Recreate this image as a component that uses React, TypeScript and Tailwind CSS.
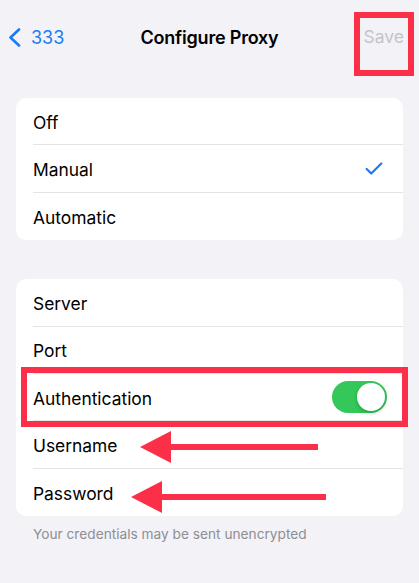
import { Check } from "lucide-react";

const font = { fontFamily: "Inter, 'Noto Sans', sans-serif" };

function Row({ label, last, right }: { label: string; last?: boolean; right?: React.ReactNode }) {
  return (
    <div className="pl-[17px]">
      <div
        className={`flex h-[47.4px] items-center justify-between pr-[16px] ${
          last ? "" : "border-b border-[#e3e3e8]"
        }`}
      >
        <span className="pt-[3px] text-[17.4px] text-black">{label}</span>
        {right}
      </div>
    </div>
  );
}

function Arrow({ width }: { width: number }) {
  // red annotation arrow pointing left
  return (
    <svg width={width} height="34" viewBox={`0 0 ${width} 34`}>
      <polygon points="0,17 31,1 31,33" fill="#fb2f47" />
      <rect x="28" y="14" width={width - 28} height="6" fill="#fb2f47" />
    </svg>
  );
}

export default function App() {
  return (
    <div className="relative h-[583px] w-[419px] overflow-hidden bg-[#f2f2f7]" style={font}>
      {/* nav bar */}
      <div className="grid h-[75px] grid-cols-[1fr_auto_1fr] items-center px-2">
        <div className="flex items-center gap-[10px] text-[#1a7cf5]">
          <svg width="13" height="19" viewBox="0 0 13 19" fill="none">
            <path d="M11 1.5 L2.5 9.5 L11 17.5" stroke="#1a7cf5" strokeWidth="2.6" strokeLinecap="round" strokeLinejoin="round" />
          </svg>
          <span className="text-[18px]">333</span>
        </div>
        <div className="text-[18px] font-semibold tracking-[-0.2px] text-black">Configure Proxy</div>
        <div className="flex justify-end pr-[7px]">
          <span className="text-[17.5px] text-[#c4c4c8]">Save</span>
        </div>
      </div>

      {/* mode card */}
      <div className="mx-4 mt-[23px] overflow-hidden rounded-[10px] bg-white">
        <Row label="Off" />
        <Row
          label="Manual"
          right={<Check className="mr-[2px] h-[22px] w-[22px] text-[#1a7cf5]" strokeWidth={2.4} />}
        />
        <Row label="Automatic" last />
      </div>

      {/* settings card */}
      <div className="mx-4 mt-[39px] overflow-hidden rounded-[10px] bg-white">
        <Row label="Server" />
        <Row label="Port" />
        <Row
          label="Authentication"
          right={
            <div className="flex h-[32px] w-[55px] items-center justify-end rounded-full bg-[#34c759] p-[2px]">
              <div className="h-[28px] w-[28px] rounded-full bg-white shadow-[0_2px_4px_rgba(0,0,0,0.2)]" />
            </div>
          }
        />
        <Row label="Username" />
        <Row label="Password" last />
      </div>

      <p className="mt-[8px] pl-[33px] text-[13.7px] text-[#8e8e93]">Your credentials may be sent unencrypted</p>

      {/* annotations */}
      <div className="absolute left-[354px] top-[12px] h-[64px] w-[60px] border-[6px] border-[#fb2f47]" />
      <div className="absolute left-[21px] top-[367px] h-[60px] w-[387px] border-[6px] border-[#fb2f47]" />
      <div className="absolute left-[140px] top-[430px]">
        <Arrow width={178} />
      </div>
      <div className="absolute left-[131px] top-[480px]">
        <Arrow width={195} />
      </div>
    </div>
  );
}
